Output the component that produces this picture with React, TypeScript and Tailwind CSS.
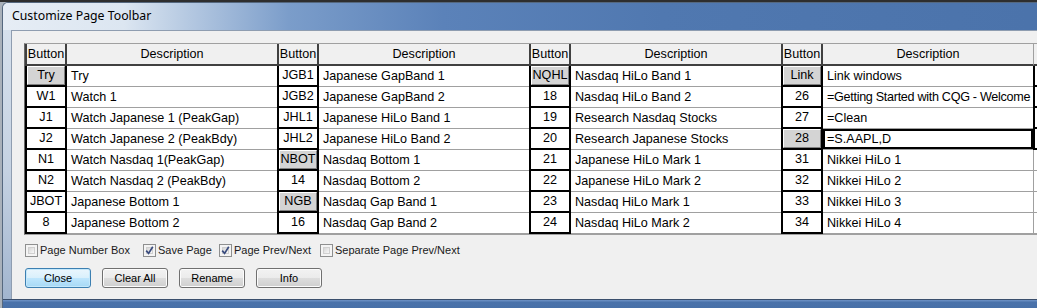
import React from "react";

type Cell = { b: string; d: string; raised?: boolean; sel?: boolean; tight?: boolean };

const groups: Cell[][] = [
  [
    { b: "Try", d: "Try", raised: true },
    { b: "W1", d: "Watch 1" },
    { b: "J1", d: "Watch Japanese 1 (PeakGap)" },
    { b: "J2", d: "Watch Japanese 2 (PeakBdy)" },
    { b: "N1", d: "Watch Nasdaq 1(PeakGap)" },
    { b: "N2", d: "Watch Nasdaq 2 (PeakBdy)" },
    { b: "JBOT", d: "Japanese Bottom 1" },
    { b: "8", d: "Japanese Bottom 2" },
  ],
  [
    { b: "JGB1", d: "Japanese GapBand 1" },
    { b: "JGB2", d: "Japanese GapBand 2" },
    { b: "JHL1", d: "Japanese HiLo Band 1" },
    { b: "JHL2", d: "Japanese HiLo Band 2" },
    { b: "NBOT", d: "Nasdaq Bottom 1", raised: true },
    { b: "14", d: "Nasdaq Bottom 2" },
    { b: "NGB", d: "Nasdaq Gap Band 1", raised: true },
    { b: "16", d: "Nasdaq Gap Band 2" },
  ],
  [
    { b: "NQHL", d: "Nasdaq HiLo Band 1", raised: true },
    { b: "18", d: "Nasdaq HiLo Band 2" },
    { b: "19", d: "Research Nasdaq Stocks" },
    { b: "20", d: "Research Japanese Stocks" },
    { b: "21", d: "Japanese HiLo Mark 1" },
    { b: "22", d: "Japanese HiLo Mark 2" },
    { b: "23", d: "Nasdaq HiLo Mark 1" },
    { b: "24", d: "Nasdaq HiLo Mark 2" },
  ],
  [
    { b: "Link", d: "Link windows", raised: true },
    { b: "26", d: "=Getting Started with CQG - Welcome", tight: true },
    { b: "27", d: "=Clean" },
    { b: "28", d: "=S.AAPL,D", raised: true, sel: true },
    { b: "31", d: "Nikkei HiLo 1" },
    { b: "32", d: "Nikkei HiLo 2" },
    { b: "33", d: "Nikkei HiLo 3" },
    { b: "34", d: "Nikkei HiLo 4" },
  ],
];

function HeaderRow() {
  return (
    <div className="flex h-[22px]">
      {groups.map((_, i) => (
        <React.Fragment key={i}>
          <div className="w-[42px] shrink-0 border-x-2 border-b-2 border-[#404040] bg-[#f0f0f0] flex items-center justify-center overflow-hidden whitespace-nowrap">
            Button
          </div>
          <div className="w-[210px] shrink-0 border-b-2 border-[#404040] bg-[#f0f0f0] flex items-center justify-center">
            Description
          </div>
        </React.Fragment>
      ))}
      <div className="w-[40px] shrink-0 border-l border-b-2 border-l-[#a0a0a0] border-b-[#404040] bg-[#f0f0f0]" />
    </div>
  );
}

function DataRow({ r }: { r: number }) {
  return (
    <div className="flex h-[21px]">
      {groups.map((g, i) => {
        const c = g[r];
        const base =
          "w-[210px] shrink-0 border-b border-[#a0a0a0] bg-white flex items-center pl-[4px] whitespace-nowrap overflow-hidden";
        const cls = c.sel
          ? base + " shadow-[inset_0_0_0_2px_#000]"
          : c.tight
          ? base + " tracking-[-0.3px]"
          : base;
        return (
          <React.Fragment key={i}>
            <div className="w-[42px] shrink-0 border-x-2 border-b-2 border-black bg-white flex">
              {c.raised ? (
                <div className="flex-1 bg-[#d4d4d4] border border-t-white border-l-white border-b-[#808080] border-r-[#808080] flex items-center justify-center whitespace-nowrap overflow-hidden">
                  {c.b}
                </div>
              ) : (
                <div className="flex-1 flex items-center justify-center whitespace-nowrap overflow-hidden">
                  {c.b}
                </div>
              )}
            </div>
            <div className={cls}>{c.d}</div>
          </React.Fragment>
        );
      })}
      {r < 4 ? (
        <div className="w-[40px] shrink-0 border-l-2 border-b-2 border-black bg-white" />
      ) : (
        <div className="w-[40px] shrink-0 border-l border-b border-[#a0a0a0] bg-white" />
      )}
    </div>
  );
}

function CheckBox({ checked, label, w }: { checked: boolean; label: string; w: string }) {
  return (
    <div className={`flex items-center shrink-0 whitespace-nowrap ${w}`}>
      <div className="w-[13px] h-[13px] border border-[#8e8f8f] bg-[#f4f4f4] p-[2px] shrink-0">
        <div className="w-full h-full bg-[linear-gradient(135deg,#d6d6d6,#f8f8f8)] border border-[#d0d0d0] flex items-center justify-center">
          {checked && (
            <svg width="9" height="9" viewBox="0 0 9 9" className="-m-[2px]">
              <path d="M1.2 4.6 L3.6 7.4 L7.8 0.8" fill="none" stroke="#3a4c7e" strokeWidth="1.7" />
            </svg>
          )}
        </div>
      </div>
      <span className="ml-[2px] text-[11px] leading-none text-[#1a1a1a]">{label}</span>
    </div>
  );
}

function WinButton({ label, focused }: { label: string; focused?: boolean }) {
  return (
    <div
      className={
        focused
          ? "w-[66px] h-[20px] rounded-[3px] border border-[#3c7fb1] bg-[linear-gradient(180deg,#eaf6fd_0%,#d9f0fc_50%,#bee6fd_51%,#a7d9f5_100%)] shadow-[inset_0_0_0_1px_#c4e8fb] flex items-center justify-center text-[11px] text-black"
          : "w-[66px] h-[20px] rounded-[3px] border border-[#707070] bg-[linear-gradient(180deg,#f2f2f2_0%,#ebebeb_50%,#dddddd_51%,#cfcfcf_100%)] shadow-[inset_0_0_0_1px_#fcfcfc] flex items-center justify-center text-[11px] text-black"
      }
    >
      {label}
    </div>
  );
}

export default function App() {
  return (
    <div className="w-[1037px] h-[308px] overflow-hidden flex flex-col bg-[#a9b1ba] font-['Liberation_Sans',Arial,sans-serif]">
      <div className="h-[2px] shrink-0 bg-[#2e2e2e]" />
      <div className="flex-1 flex pl-[2px] min-h-0">
        <div className="w-[1100px] shrink-0 flex flex-col rounded-tl-[6px] border-l border-t border-[#55687f] bg-[linear-gradient(180deg,#d9e3ee_0%,#c5d2e2_55%,#9fb3cd_100%)] overflow-hidden">
          <div className="h-[27px] shrink-0 flex items-center pl-[9px] bg-[linear-gradient(90deg,#e6edf5_0%,#dce6f1_11%,#b4c8e1_17%,#7b9dca_26%,#5b82b9_40%,#5078b0_60%,#4a72aa_100%)]">
            <span className="text-[12.3px] text-black leading-none font-['Noto_Sans',sans-serif]">Customize Page Toolbar</span>
          </div>
          <div className="flex-1 flex flex-col pl-[8px] min-h-0">
            <div className="flex-1 bg-[#f0f0f0] border-l border-t border-[#8f9db0] pl-[12px] pt-[12px] flex flex-col min-h-0">
              <div className="border-l border-t border-b border-l-[#6a6a6a] border-t-[#a0a0a0] border-b-[#a0a0a0] text-[12.6px] text-black">
                <HeaderRow />
                {[0, 1, 2, 3, 4, 5, 6, 7].map((r) => (
                  <DataRow key={r} r={r} />
                ))}
              </div>
              <div className="flex items-center mt-[9px] ml-[1px] h-[13px]">
                <CheckBox checked={false} label="Page Number Box" w="w-[118px]" />
                <CheckBox checked={true} label="Save Page" w="w-[76px]" />
                <CheckBox checked={true} label="Page Prev/Next" w="w-[101px]" />
                <CheckBox checked={false} label="Separate Page Prev/Next" w="w-[160px]" />
              </div>
              <div className="flex gap-[11px] mt-[11px] ml-[1px]">
                <WinButton label="Close" focused />
                <WinButton label="Clear All" />
                <WinButton label="Rename" />
                <WinButton label="Info" />
              </div>
            </div>
            <div className="h-[9px] shrink-0 -ml-[8px] border-t border-[#3a4e6c] bg-[linear-gradient(180deg,#6f93c6_0%,#4a72aa_30%,#4870a8_100%)]" />
          </div>
        </div>
      </div>
    </div>
  );
}
